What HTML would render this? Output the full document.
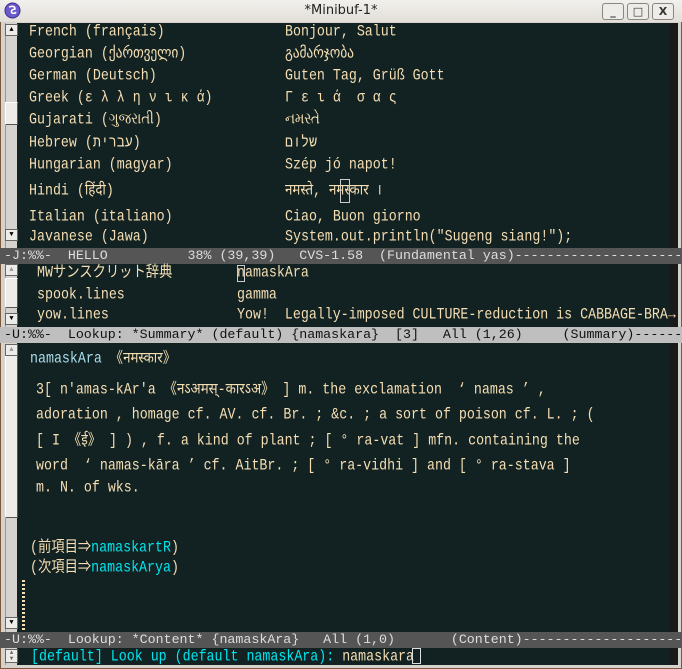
<!DOCTYPE html>
<html><head><meta charset="utf-8"><style>
*{margin:0;padding:0;box-sizing:border-box}
body{width:682px;height:669px;overflow:hidden;background:#6b4a2e;position:relative;font-family:"Liberation Mono","Noto Sans CJK JP",monospace;}
#win{position:absolute;left:0;top:0;width:682px;height:669px;background:#d6d3ce;border:1px solid #7a5a3a;border-radius:4px 4px 0 0}
#title{position:absolute;left:0;top:0;width:682px;height:22px;background:linear-gradient(#f2f0ec,#e2dfd9);font-family:"DejaVu Sans",sans-serif;font-size:13px;text-align:center;line-height:22px;color:#222}
.btn{position:absolute;top:3px;width:22px;height:17px;border:1px solid #8a8680;border-radius:3px;background:#eeece8;font-size:11px;line-height:15px;text-align:center;font-weight:bold;color:#333}
#area{position:absolute;left:17px;top:23px;width:661px;height:642px;background:#122222}
#rstrip{position:absolute;left:670px;top:23px;width:8px;height:642px;background:#1a1a1a}
.t{position:absolute;white-space:pre;font-size:13.3px;color:#f5deb3;line-height:18px;transform:scaleY(1.15);transform-origin:left center}
.ml{position:absolute;left:0;width:682px;height:16px;white-space:pre;font-size:13.3px;line-height:16px;padding-left:4px}
.sb{position:absolute;left:5px;width:12px;background:#d6d3ce;border-left:1px solid #999}
.thumb{position:absolute;left:5px;width:13px;background:#eeece8;border:1px solid #555;border-top-color:#fff;border-left-color:#fff}
.arr{position:absolute;left:5px;width:13px;height:12px;background:#eeece8;border:1px solid #666;font-size:7px;line-height:10px;text-align:center;color:#000}
.c{color:#00e5ee}
</style></head><body>
<div id="win"></div>
<div id="title">*Minibuf-1*
<svg style="position:absolute;left:4px;top:2px" width="17" height="17"><circle cx="8.5" cy="8.5" r="7.5" fill="#6a5acd" stroke="#3a2a8d"/><path d="M5 5 Q11 3 11 7 Q6 8 8 11 Q11 12 12 10" stroke="#fff" fill="none" stroke-width="1.5"/></svg>
<div class="btn" style="left:602px">_</div><div class="btn" style="left:627px">□</div><div class="btn" style="left:652px">X</div>
</div>
<div id="area"></div><div id="rstrip"></div>
<div class="sb" style="top:23px;height:225px"></div>
<div class="thumb" style="top:102px;height:23px"></div>
<div class="arr" style="top:24px">▲</div><div class="arr" style="top:229px">▼</div>
<div class="sb" style="top:264px;height:63px"></div>
<div class="thumb" style="top:278px;height:30px"></div>
<div class="arr" style="top:264px;color:#999">▲</div><div class="arr" style="top:313px">▼</div>
<div class="sb" style="top:344px;height:288px"></div>
<div class="thumb" style="top:350px;height:168px"></div>
<div class="arr" style="top:344px;color:#999">▲</div><div class="arr" style="top:617px">▼</div>
<div class="sb" style="top:648px;height:17px"></div>
<div class="arr" style="top:649px;height:14px;font-size:6px;line-height:6px;color:#666">▲<br>▼</div>
<div class="t" style="left:29px;top:23px">French (français)</div><div class="t" style="left:285px;top:23px">Bonjour, Salut</div>
<div class="t" style="left:29px;top:45px">Georgian (ქართველი)</div><div class="t" style="left:285px;top:45px">გამარჯობა</div>
<div class="t" style="left:29px;top:67px">German (Deutsch)</div><div class="t" style="left:285px;top:67px">Guten Tag, Grüß Gott</div>
<div class="t" style="left:29px;top:89px">Greek (ε λ λ η ν ι κ ά)</div><div class="t" style="left:285px;top:89px">Γ ε ι ά  σ α ς</div>
<div class="t" style="left:29px;top:111px">Gujarati (ગુજરાતી)</div><div class="t" style="left:285px;top:111px">નમસ્તે</div>
<div class="t" style="left:29px;top:134px">Hebrew (עברית)</div><div class="t" style="left:285px;top:134px">שלום</div>
<div class="t" style="left:29px;top:156px">Hungarian (magyar)</div><div class="t" style="left:285px;top:156px">Szép jó napot!</div>
<div class="t" style="left:29px;top:182px">Hindi (हिंदी)</div><div class="t" style="left:285px;top:182px">नमस्ते, नमस्कार ।</div>
<div style="position:absolute;left:340px;top:179px;width:10px;height:24px;border:1px solid #ccc"></div>
<div class="t" style="left:29px;top:208px">Italian (italiano)</div><div class="t" style="left:285px;top:208px">Ciao, Buon giorno</div>
<div class="t" style="left:29px;top:228px">Javanese (Jawa)</div><div class="t" style="left:285px;top:228px">System.out.println("Sugeng siang!");</div>
<div class="ml" style="top:248px;background:#555;color:#ddd">-J:%%-  HELLO          38% (39,39)   CVS-1.58  (Fundamental yas)-----------------------</div>
<div class="t" style="left:37px;top:264px">MWサンスクリット辞典</div><div class="t" style="left:237px;top:264px">namaskAra</div>
<div style="position:absolute;left:237px;top:265px;width:8px;height:17px;border:1px solid #ccc"></div>
<div class="t" style="left:37px;top:286px">spook.lines</div><div class="t" style="left:237px;top:286px">gamma</div>
<div class="t" style="left:37px;top:306px">yow.lines</div><div class="t" style="left:237px;top:306px">Yow!  Legally-imposed CULTURE-reduction is CABBAGE-BRA→</div>
<div class="ml" style="top:327px;background:#bfbfbf;color:#111">-U:%%-  Lookup: *Summary* (default) {namaskara}  [3]   All (1,26)     (Summary)------</div>
<div class="t" style="left:30px;top:350px;color:#a8dcea">namaskAra <span style="color:#f5deb3">《नमस्कार》</span></div>
<div class="t" style="left:36px;top:381px">3[ n'amas-kAr'a 《नऽअमस्-कारऽअ》 ] m. the exclamation  ‘ namas ’ ,</div>
<div class="t" style="left:36px;top:406px">adoration , homage cf. AV. cf. Br. ; &amp;c. ; a sort of poison cf. L. ; (</div>
<div class="t" style="left:36px;top:432px">[ I 《ई》 ] ) , f. a kind of plant ; [ ° ra-vat ] mfn. containing the</div>
<div class="t" style="left:36px;top:457px">word  ‘ namas-kāra ’ cf. AitBr. ; [ ° ra-vidhi ] and [ ° ra-stava ]</div>
<div class="t" style="left:36px;top:479px">m. N. of wks.</div>
<div class="t" style="left:30px;top:539px">(前項目⇒<span class="c">namaskartR</span>)</div>
<div class="t" style="left:30px;top:559px">(次項目⇒<span class="c">namaskArya</span>)</div>
<div style="position:absolute;left:22px;top:580px;width:3px;height:50px;background:repeating-linear-gradient(#f5deb3 0 2px,transparent 2px 4px)"></div>
<div class="ml" style="top:632px;background:#555;color:#ddd">-U:%%-  Lookup: *Content* {namaskAra}   All (1,0)       (Content)--------------------</div>
<div class="t" style="left:31px;top:648px;color:#00e5ee">[default] Look up (default namaskAra): <span style="color:#f5deb3">namaskara</span></div>
<div style="position:absolute;left:412px;top:648px;width:9px;height:16px;border:1px solid #ddd"></div>
</body></html>
